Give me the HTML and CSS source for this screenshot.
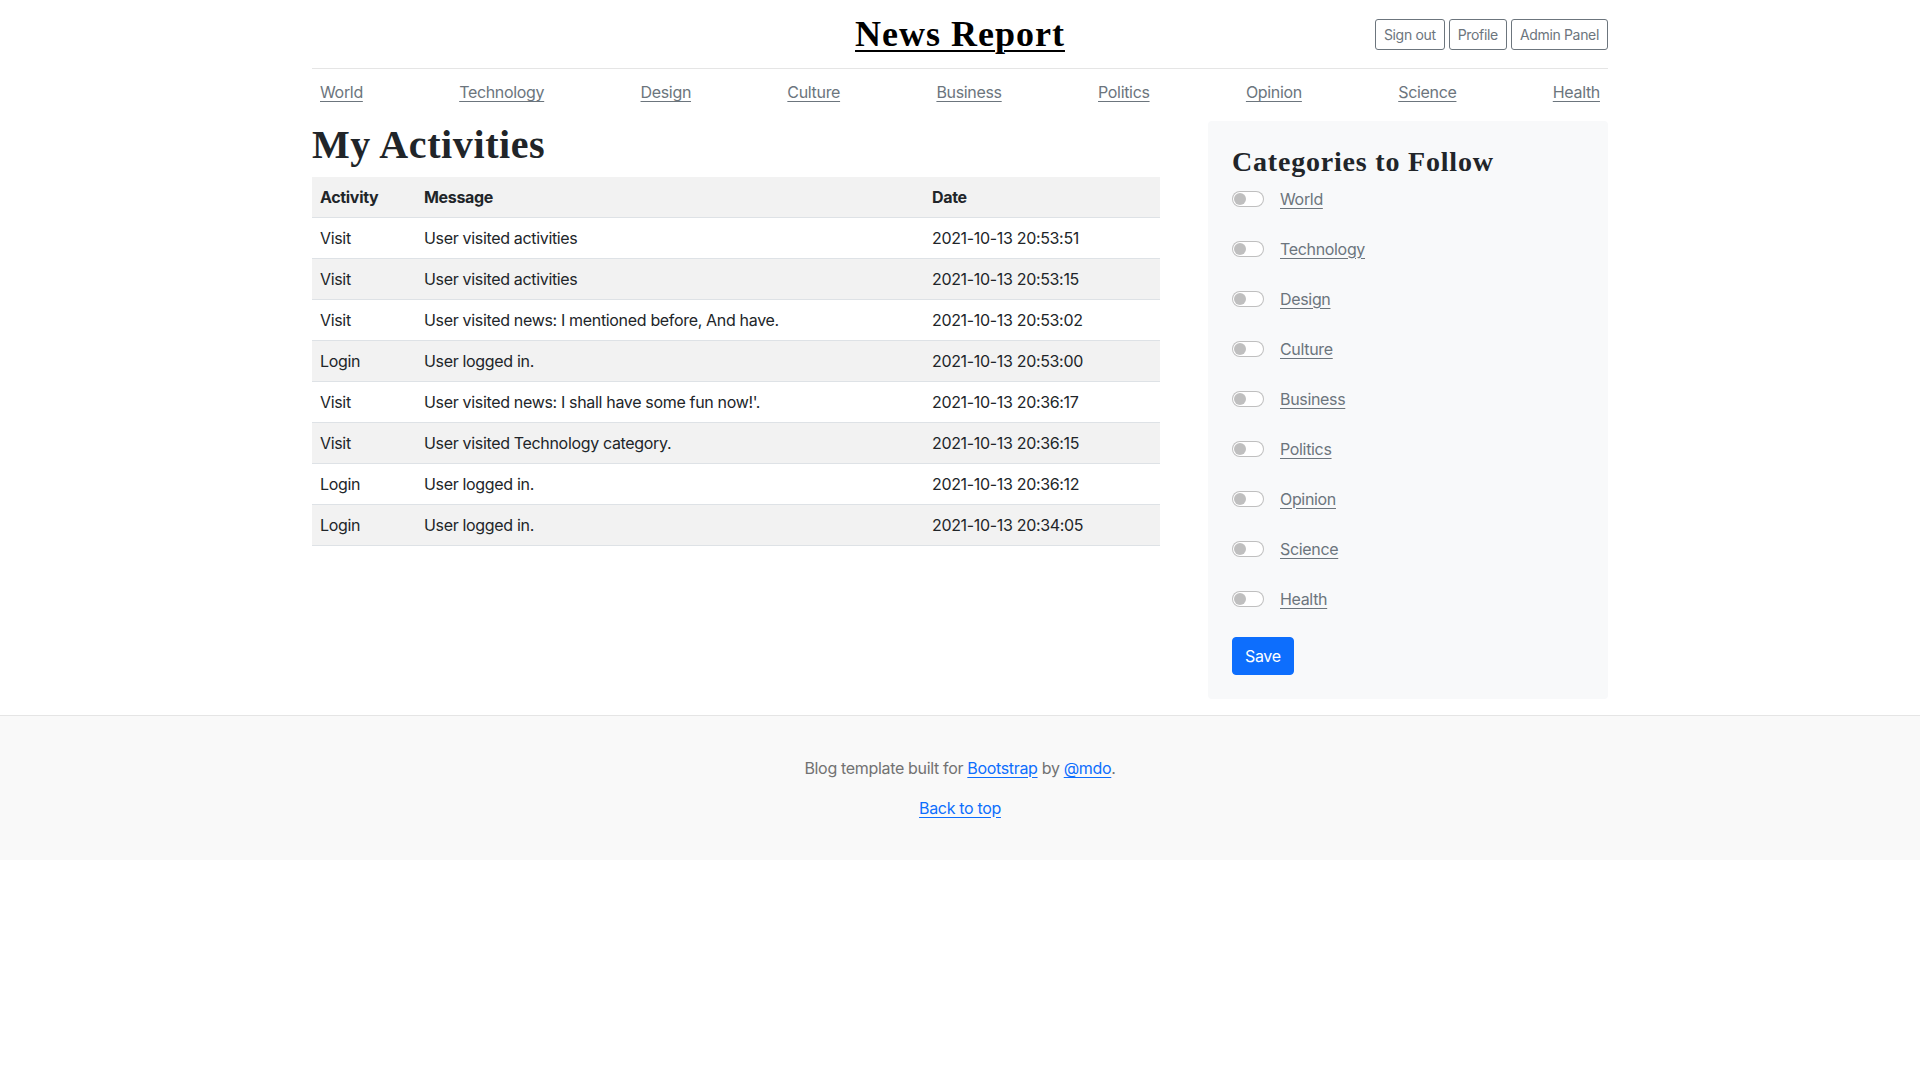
FILE: index.html
```html
<!DOCTYPE html>
<html lang="en">
<head>
<meta charset="utf-8">
<title>News Report</title>
<link rel="stylesheet" href="styles.css">
</head>
<body>
<div class="container">
  <header class="blog-header">
    <div class="header-side"></div>
    <div class="header-center"><a class="logo" href="#">News Report</a></div>
    <div class="header-side header-actions">
      <a class="btn-sm" href="#">Sign out</a>
      <a class="btn-sm" href="#">Profile</a>
      <a class="btn-sm" href="#">Admin Panel</a>
    </div>
  </header>
  <div class="nav-scroller">
    <nav class="nav">
      <a href="#">World</a>
      <a href="#">Technology</a>
      <a href="#">Design</a>
      <a href="#">Culture</a>
      <a href="#">Business</a>
      <a href="#">Politics</a>
      <a href="#">Opinion</a>
      <a href="#">Science</a>
      <a href="#">Health</a>
    </nav>
  </div>
</div>

<main class="container">
  <div class="row">
    <div class="col-main">
      <h1 class="page-title">My Activities</h1>
      <table class="table">
        <thead>
          <tr><th class="c1">Activity</th><th class="c2">Message</th><th class="c3">Date</th></tr>
        </thead>
        <tbody>
          <tr><td>Visit</td><td>User visited activities</td><td>2021-10-13 20:53:51</td></tr>
          <tr><td>Visit</td><td>User visited activities</td><td>2021-10-13 20:53:15</td></tr>
          <tr><td>Visit</td><td>User visited news: I mentioned before, And have.</td><td>2021-10-13 20:53:02</td></tr>
          <tr><td>Login</td><td>User logged in.</td><td>2021-10-13 20:53:00</td></tr>
          <tr><td>Visit</td><td>User visited news: I shall have some fun now!'.</td><td>2021-10-13 20:36:17</td></tr>
          <tr><td>Visit</td><td>User visited Technology category.</td><td>2021-10-13 20:36:15</td></tr>
          <tr><td>Login</td><td>User logged in.</td><td>2021-10-13 20:36:12</td></tr>
          <tr><td>Login</td><td>User logged in.</td><td>2021-10-13 20:34:05</td></tr>
        </tbody>
      </table>
    </div>
    <div class="col-side">
      <div class="side-box">
        <h3 class="side-title">Categories to Follow</h3>
        <form class="follow-list">
          <div class="form-switch"><span class="switch"></span><a href="#">World</a></div>
          <div class="form-switch"><span class="switch"></span><a href="#">Technology</a></div>
          <div class="form-switch"><span class="switch"></span><a href="#">Design</a></div>
          <div class="form-switch"><span class="switch"></span><a href="#">Culture</a></div>
          <div class="form-switch"><span class="switch"></span><a href="#">Business</a></div>
          <div class="form-switch"><span class="switch"></span><a href="#">Politics</a></div>
          <div class="form-switch"><span class="switch"></span><a href="#">Opinion</a></div>
          <div class="form-switch"><span class="switch"></span><a href="#">Science</a></div>
          <div class="form-switch"><span class="switch"></span><a href="#">Health</a></div>
          <div><button type="button" class="btn-primary">Save</button></div>
        </form>
      </div>
    </div>
  </div>
</main>

<footer class="blog-footer">
  <p>Blog template built for <a href="#">Bootstrap</a> by <a href="#">@mdo</a>.</p>
  <p><a href="#">Back to top</a></p>
</footer>
</body>
</html>
```

FILE: styles.css
```css
* { box-sizing: border-box; }

body {
  margin: 0;
  font-family: Inter, "Liberation Sans", sans-serif;
  font-size: 16px;
  line-height: 1.5;
  letter-spacing: -0.33px;
  color: #212529;
  background: #fff;
}

.container {
  width: 1320px;
  margin: 0 auto;
  padding: 0 12px;
}

.blog-header {
  display: flex;
  align-items: center;
  justify-content: space-between;
  padding: 16px 0;
  line-height: 1;
  border-bottom: 1px solid #e5e5e5;
}

.header-side { flex: 0 0 33.3333%; }
.header-center { flex: 0 0 33.3333%; text-align: center; }

.logo {
  font-family: "Liberation Serif", serif;
  font-weight: 700;
  font-size: 36px;
  letter-spacing: 1px;
  color: #000;
  text-decoration: underline;
  text-decoration-thickness: 2px;
  text-underline-offset: 4px;
}

.header-actions {
  display: flex;
  justify-content: flex-end;
  gap: 4px;
}

.btn-sm {
  display: inline-block;
  padding: 4px 8px;
  font-size: 14px;
  line-height: 21px;
  color: #6c757d;
  border: 1px solid #6c757d;
  border-radius: 3px;
  text-decoration: none;
}

.nav-scroller {
  height: 44px;
  padding: 4px 0;
  margin-bottom: 8px;
  overflow: hidden;
}

.nav {
  display: flex;
  justify-content: space-between;
  margin-top: -1px;
}

.nav a {
  padding: 8px;
  color: #6c757d;
  text-decoration: underline;
  text-underline-offset: 3px;
}

.row {
  display: flex;
  margin: 0 -24px;
}

.col-main { flex: 0 0 896px; padding: 0 24px; }
.col-side { flex: 0 0 448px; padding: 0 24px; }

.page-title {
  margin: 0 0 8px;
  font-family: "Liberation Serif", serif;
  font-weight: 700;
  font-size: 40px;
  line-height: 48px;
  letter-spacing: 0.6px;
  color: #212529;
}

.table {
  width: 100%;
  border-collapse: collapse;
  margin-bottom: 16px;
}

.table th, .table td {
  padding: 8px;
  text-align: left;
  border-bottom: 1px solid #dee2e6;
  vertical-align: top;
}

.table th { font-weight: 700; }
.table thead tr { background: #f2f2f2; }
.table tbody tr:nth-child(even) { background: #f2f2f2; }

.c1 { width: 104px; }
.c2 { width: 508px; }

.side-box {
  padding: 24px;
  margin-bottom: 16px;
  background: #f8f9fa;
  border-radius: 4px;
}

.side-title {
  margin: 0 0 8px;
  font-family: "Liberation Serif", serif;
  font-weight: 700;
  font-size: 28px;
  line-height: 1.2;
  letter-spacing: 0.8px;
  color: #212529;
}

.follow-list {
  display: flex;
  flex-direction: column;
  gap: 26px;
}

.form-switch {
  display: flex;
  align-items: center;
  height: 24px;
}

.switch {
  position: relative;
  width: 32px;
  height: 16px;
  margin-right: 16px;
  background: #fff;
  border: 1px solid rgba(0,0,0,.25);
  border-radius: 16px;
}

.switch::after {
  content: "";
  position: absolute;
  left: 1px;
  top: 1px;
  width: 12px;
  height: 12px;
  border-radius: 50%;
  background: rgba(0,0,0,.25);
}

.form-switch a {
  color: #6c757d;
  text-decoration: underline;
  text-underline-offset: 3px;
}

.btn-primary {
  padding: 6px 12px;
  font-family: inherit;
  font-size: 16px;
  line-height: 24px;
  letter-spacing: inherit;
  color: #fff;
  background: #0d6efd;
  border: 1px solid #0d6efd;
  border-radius: 4px;
}

.blog-footer {
  padding: 40px 0;
  color: #727272;
  text-align: center;
  background: #f9f9f9;
  border-top: 1px solid #e5e5e5;
}

.blog-footer p { margin: 0 0 16px; }
.blog-footer p:last-child { margin-bottom: 0; }
.blog-footer a { color: #0d6efd; text-decoration: underline; text-underline-offset: 3px; }
```
